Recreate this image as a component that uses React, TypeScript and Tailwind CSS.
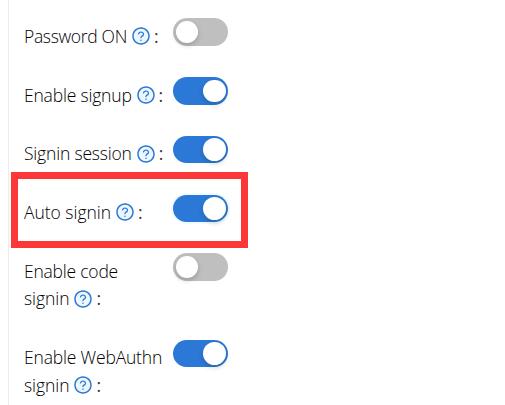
interface Line {
  text: string;
  tracking: string;
}

interface Setting {
  lines: Line[];
  on: boolean;
  height: string;
  focused?: boolean;
}

const settings: Setting[] = [
  { lines: [{ text: "Password ON", tracking: "tracking-[-0.32px]" }], on: false, height: "h-[58.75px]" },
  { lines: [{ text: "Enable signup", tracking: "tracking-[-0.19px]" }], on: true, height: "h-[58.75px]" },
  { lines: [{ text: "Signin session", tracking: "tracking-[-0.19px]" }], on: true, height: "h-[58.75px]" },
  { lines: [{ text: "Auto signin", tracking: "tracking-[-0.03px]" }], on: true, height: "h-[58.75px]", focused: true },
  {
    lines: [
      { text: "Enable code", tracking: "tracking-[-0.22px]" },
      { text: "signin", tracking: "tracking-[-0.06px]" },
    ],
    on: false,
    height: "h-[86.4px]",
  },
  {
    lines: [
      { text: "Enable WebAuthn", tracking: "tracking-[-0.18px]" },
      { text: "signin", tracking: "tracking-[-0.06px]" },
    ],
    on: true,
    height: "h-[65px]",
  },
];

function HelpIcon() {
  return (
    <svg viewBox="0 0 1024 1024" className="ml-1 mr-[3px] size-5 shrink-0" fill="#2c78d6">
      <circle cx="512" cy="512" r="410" fill="#edf7ff" />
      <path d="M512 64C264.6 64 64 264.6 64 512s200.6 448 448 448 448-200.6 448-448S759.4 64 512 64zm0 820c-205.4 0-372-166.6-372-372s166.6-372 372-372 372 166.6 372 372-166.6 372-372 372z" />
      <path d="M623.6 316.7C593.6 290.4 554 276 512 276s-81.6 14.5-111.6 40.7C369.2 344 352 380.7 352 420v7.6c0 4.4 3.6 8 8 8h48c4.4 0 8-3.6 8-8V420c0-44.1 43.1-80 96-80s96 35.9 96 80c0 31.1-22 59.6-56.1 72.7-21.2 8.1-39.2 22.3-52.1 40.9-13.1 19-19.9 41.8-19.9 64.9V620c0 4.4 3.6 8 8 8h48c4.4 0 8-3.6 8-8v-22.7a48.3 48.3 0 0 1 30.9-44.8c59-22.7 97.1-74.7 97.1-132.5.1-39.3-17.1-76-48.3-103.3zM472 732a40 40 0 1 0 80 0 40 40 0 1 0-80 0z" />
    </svg>
  );
}

function Toggle({ on, focused }: { on: boolean; focused?: boolean }) {
  return (
    <button
      type="button"
      role="switch"
      aria-checked={on}
      className={`flex h-[27.5px] w-[55px] items-center rounded-full p-[2.5px] ${
        on ? "justify-end bg-[#2c78d6]" : "justify-start bg-[#bfbfbf]"
      } ${focused ? "shadow-[0_0_0_2px_#f2f9ff]" : ""}`}
    >
      <span className="size-[22.5px] rounded-full bg-white shadow-[0_2.5px_5px_rgba(0,35,11,0.2)]" />
    </button>
  );
}

export default function App() {
  return (
    <div className="relative h-[405px] w-[505px] overflow-hidden bg-white pl-2 font-['Open_Sans','Noto_Sans',sans-serif] text-[17.5px] font-light text-black">
      <div className="h-full border-l border-[#ececec] pl-[15px] pt-[18.25px]">
        {settings.map((s) => (
          <div key={s.lines[0].text} className={`flex ${s.height}`}>
            <div className="w-[149px] shrink-0 pt-[4.05px]">
              {s.lines.map((line, i) => (
                <div key={line.text} className="flex h-[27.5px] items-center whitespace-nowrap">
                  <span className={line.tracking}>{line.text}</span>
                  {i === s.lines.length - 1 && (
                    <>
                      <HelpIcon />
                      <span className="font-normal text-[#333]">:</span>
                    </>
                  )}
                </div>
              ))}
            </div>
            <Toggle on={s.on} focused={s.focused} />
          </div>
        ))}
      </div>
      <div className="pointer-events-none absolute left-[11px] top-[172px] h-[76px] w-[237px] border-[7px] border-[#fc3737]" />
    </div>
  );
}
